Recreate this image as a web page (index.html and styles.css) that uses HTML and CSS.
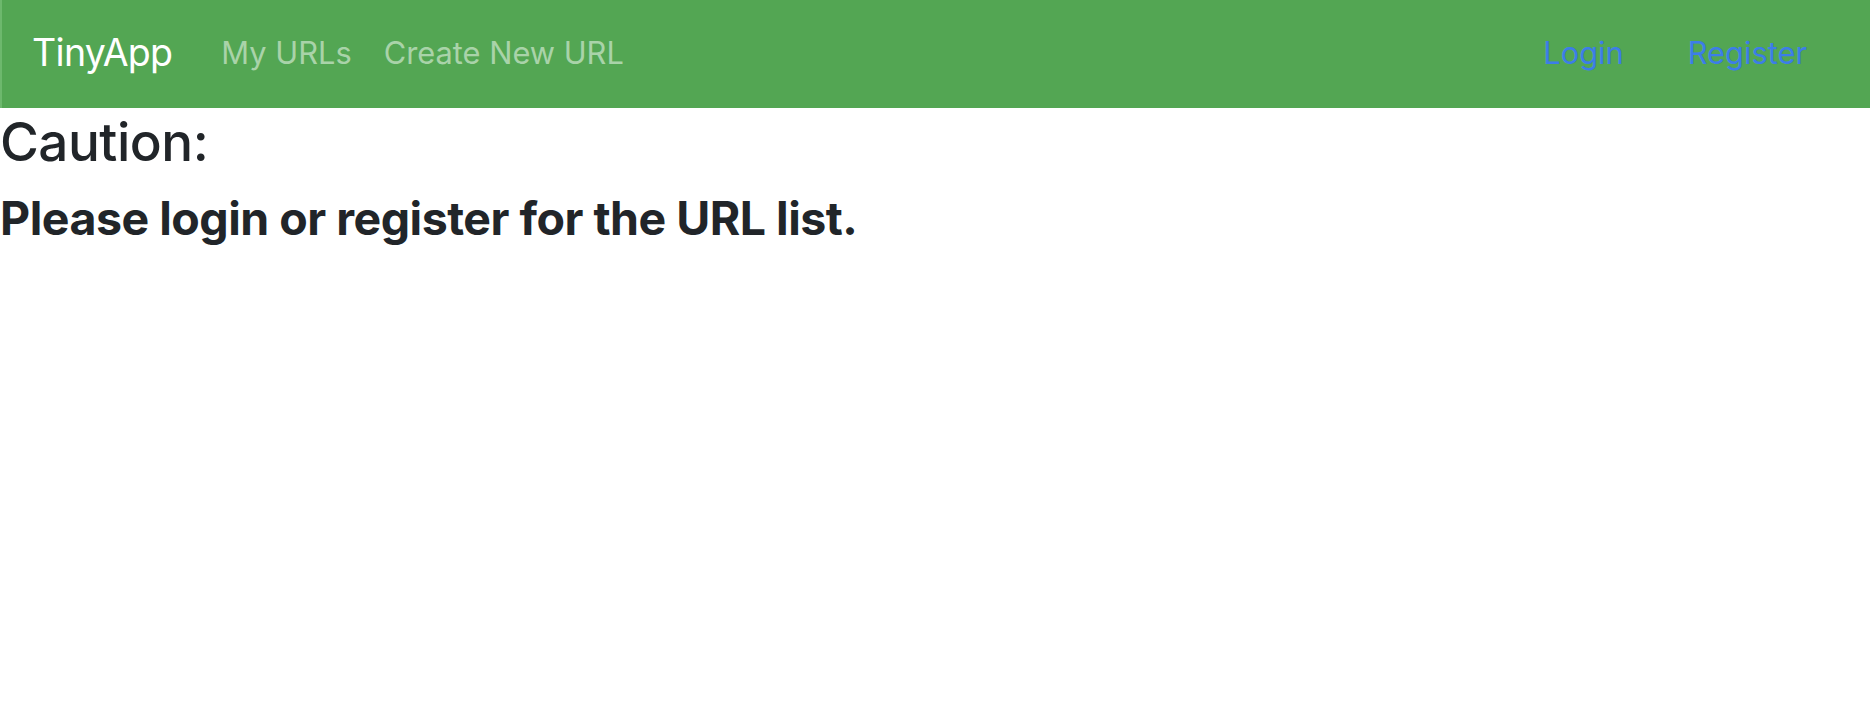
FILE: index.html
```html
<!DOCTYPE html>
<html>
<head>
<meta charset="utf-8">
<link rel="stylesheet" href="styles.css">
<title>TinyApp</title>
</head>
<body>
<nav class="navbar">
  <div class="nav-left">
    <a class="brand" href="#">TinyApp</a>
    <a class="nav-link muted" href="#">My URLs</a>
    <a class="nav-link muted" href="#">Create New URL</a>
  </div>
  <div class="nav-right">
    <a class="nav-link blue" href="#">Login</a>
    <a class="nav-link blue" href="#">Register</a>
  </div>
</nav>
<main class="content">
  <h3 class="caution">Caution:</h3>
  <h4 class="message">Please login or register for the URL list.</h4>
</main>
</body>
</html>
```

FILE: styles.css
```css
* { box-sizing: border-box; }
html, body {
  margin: 0;
  padding: 0;
  background: #ffffff;
  font-family: Inter, "Noto Sans", "Liberation Sans", sans-serif;
  color: #212529;
}
a { text-decoration: none; }
.navbar {
  height: 108px;
  background: #53a653;
  border-left: 2px solid #6db86d;
  display: flex;
  align-items: center;
  justify-content: space-between;
  padding: 0 63px 4px 30px;
}
.nav-left, .nav-right {
  display: flex;
  align-items: center;
}
.brand {
  color: #ffffff;
  font-size: 37.5px;
  margin-right: 49px;
  letter-spacing: -0.7px;
}
.nav-link {
  font-size: 30.8px;
  letter-spacing: 0;
}
.nav-left .nav-link + .nav-link { margin-left: 32px; }
.muted { color: #a9d3a9; }
.blue { color: #3c7de8; }
.nav-right .nav-link + .nav-link { margin-left: 64px; }
.content { padding: 0; }
.caution {
  margin: 3px 0 0 0;
  font-size: 53px;
  font-weight: 500;
  line-height: 1.2;
  letter-spacing: -0.5px;
}
.message {
  margin: 16px 0 0 0;
  font-size: 46.5px;
  font-weight: 700;
  line-height: 1.2;
  letter-spacing: -0.5px;
}
```
